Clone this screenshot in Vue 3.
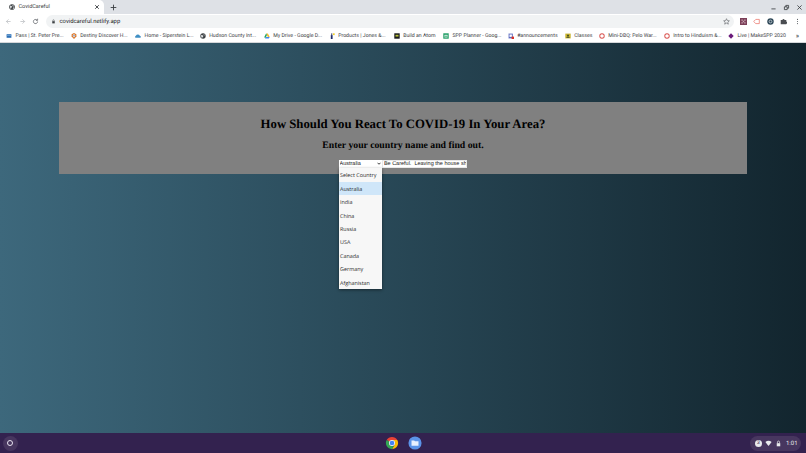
<template>
  <div class="screen">
    <!-- Chrome window -->
    <header class="tabstrip">
      <div class="tab">
        <svg class="globe" viewBox="0 0 16 16"><circle cx="8" cy="8" r="7.5" fill="#3c4043" /><path d="M3 4l4 1 1 3-2 2-1 4-2-5zM10 2l3 3-2 2-2-2zM11 9l3 0-2 4-2-1z" fill="#e8eaed" /></svg>
        <span class="tab-title">CovidCareful</span>
        <svg class="tab-close" viewBox="0 0 10 10"><path d="M2 2l6 6M8 2l-6 6" stroke="#3c4043" stroke-width="1.5" /></svg>
      </div>
      <svg class="new-tab" viewBox="0 0 10 10"><path d="M5 1v8M1 5h8" stroke="#3c4043" stroke-width="1.3" /></svg>
      <div class="window-btns">
        <svg viewBox="0 0 10 10"><path d="M2 7h6" stroke="#3c4043" stroke-width="1.2" /></svg>
        <svg viewBox="0 0 10 10"><path d="M2 4h4v4H2zM4 4V2h4v4H6" fill="none" stroke="#3c4043" stroke-width="1.2" /></svg>
        <svg viewBox="0 0 10 10"><path d="M2 2l6 6M8 2l-6 6" stroke="#3c4043" stroke-width="1.2" /></svg>
      </div>
    </header>

    <div class="toolbar">
      <svg class="nav" viewBox="0 0 10 10"><path d="M8 5H2M5 2L2 5l3 3" fill="none" stroke="#b4b7bb" stroke-width="1" /></svg>
      <svg class="nav" viewBox="0 0 10 10"><path d="M2 5h6M5 2l3 3-3 3" fill="none" stroke="#b4b7bb" stroke-width="1" /></svg>
      <svg class="nav" viewBox="0 0 10 10"><path d="M8 5a3 3 0 1 1-1-2.2M8 1v2.400H5.600" fill="none" stroke="#5f6368" stroke-width="1.100" /></svg>
      <div class="omnibox">
        <svg class="lock" viewBox="0 0 8 8"><path d="M2 3.500h4V7H2z" fill="#3c4043" /><path d="M2.800 3.500V2.400a1.200 1.200 0 0 1 2.400 0v1.100" fill="none" stroke="#3c4043" stroke-width=".7" /></svg>
        <span class="url">covidcareful.netlify.app</span>
        <svg class="star" viewBox="0 0 10 10"><path d="M5 1l1.200 2.700 2.900.3-2.200 1.900.7 2.900L5 7.300 2.400 8.800l.7-2.900L.9 4l2.900-.3z" fill="none" stroke="#5f6368" stroke-width=".9" /></svg>
      </div>
      <div class="extensions">
        <svg viewBox="0 0 10 10"><rect width="10" height="10" fill="#7b3f58" /><path d="M2 2h2v2H2zM6 2h2v2H6zM4 4h2v2H4zM2 6h2v2H2zM6 6h2v2H6z" fill="#c9a6b4" /></svg>
        <svg viewBox="0 0 10 10"><path d="M1 5l3-3h5v6H4z" fill="none" stroke="#ea6a60" stroke-width="1" /></svg>
        <svg viewBox="0 0 10 10"><circle cx="5" cy="5" r="4.600" fill="#2f4858" /><circle cx="5" cy="5" r="2" fill="none" stroke="#dfe7ec" stroke-width="1" /></svg>
        <svg viewBox="0 0 10 10"><path d="M1 3h2.500a1.500 1.500 0 0 1 3 0H9v2.200a1.500 1.500 0 0 1 0 3V9H1z" fill="#4a4d51" /></svg>
        <svg viewBox="0 0 10 10"><circle cx="5" cy="2" r=".8" fill="#5f6368" /><circle cx="5" cy="5" r=".8" fill="#5f6368" /><circle cx="5" cy="8" r=".8" fill="#5f6368" /></svg>
      </div>
    </div>

    <nav class="bookmarks">
      <span v-for="b in bookmarks" :key="b.label" class="bookmark" :style="{ width: b.width + 'px' }">
        <svg class="favicon" viewBox="0 0 10 10">
          <path v-for="p in b.icon" :key="p[0]" :d="p[0]" :fill="p[1]" />
        </svg>
        <span>{{ b.label }}</span>
      </span>
      <span class="more">»</span>
    </nav>

    <main class="page">
      <section class="panel">
        <h1>How Should You React To COVID-19 In Your Area?</h1>
        <h2>Enter your country name and find out.</h2>
        <div class="controls">
          <div class="select-wrap">
            <select>
              <option v-for="c in countries" :key="c" :selected="c === 'Australia'">{{ c }}</option>
            </select>
            <svg class="chevron" viewBox="0 0 8 6"><path d="M1 1.500l3 3 3-3" fill="none" stroke="#000" stroke-width="1.500" /></svg>
            <ul class="dropdown">
              <li v-for="c in countries" :key="c" :class="{ active: c === 'Australia' }">{{ c }}</li>
            </ul>
          </div>
          <input type="text" value="Be Careful.  Leaving the house should be limited" />
        </div>
      </section>
    </main>

    <!-- ChromeOS shelf -->
    <footer class="shelf">
      <span class="launcher"><i></i></span>
      <div class="apps">
        <span class="app">
          <svg viewBox="0 0 16 16">
            <path d="M1.940 4.500A7 7 0 0 1 14.060 4.500H8A3.500 3.500 0 0 0 4.970 6.250z" fill="#ea4335" />
            <path d="M14.060 4.500A7 7 0 0 1 8 15L11.030 9.750A3.500 3.500 0 0 0 8 4.500z" fill="#fbbc04" />
            <path d="M8 15A7 7 0 0 1 1.940 4.500L4.970 6.250A3.500 3.500 0 0 0 11.030 9.750z" fill="#34a853" />
            <circle cx="8" cy="8" r="3.500" fill="#fff" />
            <circle cx="8" cy="8" r="2.700" fill="#4285f4" />
          </svg>
          <i class="dot"></i>
        </span>
        <span class="app">
          <svg viewBox="0 0 16 16">
            <circle cx="8" cy="8" r="7.500" fill="#5b93e8" />
            <path d="M4 5h3l1 1h4v5H4z" fill="#e8f0fe" />
          </svg>
          <i class="dot"></i>
        </span>
      </div>
      <div class="tray">
        <span class="tray-badge">3</span>
        <svg viewBox="0 0 10 10"><path d="M.5 3a7 7 0 0 1 9 0L5 8.500z" fill="#e8eaed" /></svg>
        <svg viewBox="0 0 10 10"><path d="M2.500 4.500h5V9h-5z" fill="#e8eaed" /><path d="M3.500 4.500V3a1.500 1.500 0 0 1 3 0v1.500" fill="none" stroke="#e8eaed" /></svg>
        <span class="time">1:01</span>
      </div>
    </footer>
  </div>
</template>

<script setup>
const countries = [
  "Select Country",
  "Australia",
  "India",
  "China",
  "Russia",
  "USA",
  "Canada",
  "Germany",
  "Afghanistan",
];

const ring = [["M5 .5a4.500 4.500 0 1 0 0 9 4.500 4.500 0 0 0 0-9zm0 1.500a3 3 0 1 1 0 6 3 3 0 0 1 0-6z", "#d9534f"]];

const bookmarks = [
  { label: "Pass | St. Peter Pre...", width: 64.7, icon: [["M1 2h8v6H1z", "#2c6fb5"], ["M1 4h8v1H1z", "#8ab6e0"]] },
  { label: "Destiny Discover H...", width: 64.3, icon: [["M5 0l4 2v4l-4 4-4-4V2z", "#d9762a"], ["M5 2l2 1.200v2L5 7.500 3 5.200v-2z", "#fff"], ["M5 3.500l1 .7v.8L5 6l-1-1v-.8z", "#2c5aa0"]] },
  { label: "Home - Siperstein L...", width: 64.7, icon: [["M1 8a2 2 0 0 1 .5-3.500A3.500 3.500 0 0 1 8 4.500 2 2 0 0 1 9 8z", "#3f8fc4"]] },
  { label: "Hudson County Int...", width: 64, icon: [["M5 .5a4.500 4.500 0 1 0 0 9 4.500 4.500 0 0 0 0-9z", "#3c4043"], ["M2 3l3 1 .5 2-1.500 1-.5 2-1.500-3zM6 1.500l2 2-1.500 1z", "#e8eaed"]] },
  { label: "My Drive - Google D...", width: 65, icon: [["M3.500 1h3l3 5.500h-3z", "#f2b92c"], ["M3.500 1L.5 6.500 2 9l3-5.500z", "#1fa463"], ["M2 9l1.500-2.500h6L8 9z", "#4285f4"]] },
  { label: "Products | Jones &...", width: 65, icon: [["M3 3.500h3V10H3z", "#1c2a6b"], ["M3.500 1h2v2h-2z", "#1c2a6b"], ["M6.500 .5h3v3h-3z", "#f2d22c"]] },
  { label: "Build an Atom", width: 49.3, icon: [["M.5.5h9v9h-9z", "#1b1b1b"], ["M2.500 3h5v3h-5z", "#b9c23a"]] },
  { label: "SPP Planner - Goog...", width: 64.7, icon: [["M.5.5h9v9h-9z", "#1f9d64"], ["M2.500 3h5v4.500h-5z", "#fff"], ["M4.500 3h1v4.500h-1zM2.500 4.800h5v1h-5z", "#1f9d64"]] },
  { label: "#announcements", width: 57, icon: [["M1 1h7v8H1z", "#5c6bc0"], ["M2.500 2.500h4v4h-4z", "#fff"], ["M6 6h4v4H6z", "#d93025"]] },
  { label: "Classes", width: 34, icon: [["M.5 1h9v8h-9z", "#c9b32d"], ["M3.500 3h3v3h-3zM2.500 6.500h5V8h-5z", "#3d4a2a"]] },
  { label: "Mini-DBQ: Pelo War...", width: 65, icon: ring },
  { label: "Intro to Hinduism &...", width: 64.3, icon: ring },
  { label: "Live | MakeSPP 2020", width: 64, icon: [["M5 .5L9.500 5 5 9.500.5 5z", "#6a1b7a"]] },
];
</script>

<style>
html,
body {
  margin: 0;
  overflow: hidden;
}
</style>

<style scoped>
.screen {
  width: 806px;
  height: 453px;
  display: flex;
  flex-direction: column;
  overflow: hidden;
  font-family: "Roboto", "Liberation Sans", sans-serif;
  text-rendering: geometricPrecision;
}

/* Tabs */
.tabstrip {
  height: 14px;
  background: #dee1e6;
  display: flex;
  align-items: center;
}
.tab {
  width: 104px;
  height: 14px;
  background: #fff;
  border-radius: 0 5px 0 0;
  display: flex;
  align-items: center;
  padding-left: 9px;
  box-sizing: border-box;
  font-size: 5.5px;
  color: #3c4043;
}
.globe {
  width: 6px;
  height: 6px;
  margin-right: 3.500px;
}
.tab-title {
  flex: 1;
}
.tab-close {
  width: 6px;
  height: 6px;
  margin-right: 4px;
}
.new-tab {
  width: 7px;
  height: 7px;
  margin-left: 5.500px;
}
.window-btns {
  margin-left: auto;
  display: flex;
  gap: 6px;
  padding-right: 3.500px;
}
.window-btns svg {
  width: 7px;
  height: 7px;
}

/* Toolbar */
.toolbar {
  height: 14px;
  background: #fff;
  display: flex;
  align-items: center;
  padding-left: 5px;
}
.nav {
  width: 7px;
  height: 7px;
  margin-right: 6.500px;
}
.omnibox {
  width: 688px;
  height: 13px;
  margin-top: 1px;
  border-radius: 7px;
  background: #f1f3f4;
  display: flex;
  align-items: center;
  padding: 0 3.500px 0 5px;
  box-sizing: border-box;
  font-size: 5.900px;
  color: #202124;
}
.lock {
  width: 5px;
  height: 5px;
  margin-right: 4px;
}
.url {
  flex: 1;
}
.star {
  width: 7px;
  height: 7px;
}
.extensions {
  display: flex;
  align-items: center;
  gap: 6.400px;
  margin-left: 6.500px;
}
.extensions svg {
  width: 7px;
  height: 7px;
}

/* Bookmarks */
.bookmarks {
  height: 15px;
  background: #fff;
  display: flex;
  align-items: center;
  padding: 1px 0 0 6px;
  font-size: 5.200px;
  color: #3c4043;
  box-sizing: border-box;
  border-bottom: 1px solid #d5d7da;
}
.bookmark {
  display: flex;
  align-items: center;
  white-space: nowrap;
}
.favicon {
  width: 6px;
  height: 6px;
  margin-right: 3.500px;
  flex: none;
}
.more {
  margin-left: auto;
  margin-right: 7px;
  font-size: 7px;
}

/* Page */
.page {
  flex: 1;
  background: linear-gradient(to right, #3d687c, #12252e);
  padding: 59px 59px 0;
}
.panel {
  background: #808080;
  height: 72px;
  box-sizing: border-box;
  padding-top: 15px;
  text-align: center;
  font-family: "Liberation Serif", serif;
  color: #000;
}
h1 {
  margin: 0;
  font-size: 12.750px;
  line-height: 15px;
}
h2 {
  margin: 7px 0 0;
  font-size: 9.750px;
  line-height: 13px;
}
.controls {
  display: flex;
  justify-content: center;
  align-items: center;
  gap: 0.700px;
  margin-top: 7.500px;
  height: 8.400px;
}
.select-wrap {
  position: relative;
}
select {
  appearance: none;
  width: 43px;
  height: 7.800px;
  padding: 1px 0 0 1px;
  border: none;
  border-radius: 0;
  background-color: #fff;
  font: 5.500px "Liberation Sans", sans-serif;
  color: #222;
  text-rendering: geometricPrecision;
  display: block;
}
.chevron {
  position: absolute;
  top: 2px;
  right: 1px;
  width: 4px;
  height: 3px;
  pointer-events: none;
}
input {
  width: 85.300px;
  height: 8.400px;
  padding: 0.500px 0.700px 0;
  box-sizing: border-box;
  border: 0.500px solid #e8e8e8;
  background: #fff;
  font: 5.500px "Liberation Sans", sans-serif;
  color: #222;
  text-rendering: geometricPrecision;
  outline: none;
}
.dropdown {
  position: absolute;
  top: 8.400px;
  left: 0;
  width: 43px;
  margin: 0;
  padding: 0;
  list-style: none;
  background: #f7f7f7;
  box-shadow: 0 1px 3px rgba(0, 0, 0, 0.45);
  font: 5.400px "Open Sans", "Liberation Sans", sans-serif;
  color: #2a2a2a;
  text-align: left;
}
.dropdown li {
  height: 13.440px;
  line-height: 14px;
  padding-left: 1.500px;
  white-space: nowrap;
}
.dropdown li.active {
  background: #cfe6f9;
}

/* Shelf */
.shelf {
  height: 20px;
  background: #33224f;
  display: flex;
  align-items: center;
  color: #e8eaed;
}
.launcher {
  width: 15px;
  height: 15px;
  margin-left: 2.500px;
  border-radius: 50%;
  background: #47365f;
  display: flex;
  align-items: center;
  justify-content: center;
}
.launcher i {
  width: 4px;
  height: 4px;
  border: 1px solid #e8e3f0;
  border-radius: 50%;
}
.apps {
  margin-left: 367px;
  display: flex;
  gap: 9px;
}
.app {
  position: relative;
  display: block;
  width: 14px;
  height: 14px;
}
.app svg {
  display: block;
  width: 14px;
  height: 14px;
}
.dot {
  position: absolute;
  left: 6px;
  bottom: -3.500px;
  width: 2px;
  height: 1px;
  background: #d8d4e0;
}
.tray {
  margin-left: auto;
  margin-right: 5px;
  width: 51px;
  height: 15px;
  border-radius: 8px;
  background: #47365f;
  display: flex;
  align-items: center;
  padding-left: 5px;
  gap: 3px;
  box-sizing: border-box;
  font-size: 6px;
}
.tray svg {
  width: 7px;
  height: 7px;
}
.tray-badge {
  width: 7px;
  height: 7px;
  border-radius: 50%;
  background: #e8eaed;
  color: #33224f;
  font-size: 5px;
  line-height: 7px;
  text-align: center;
}
.time {
  margin-left: 1px;
}
</style>
